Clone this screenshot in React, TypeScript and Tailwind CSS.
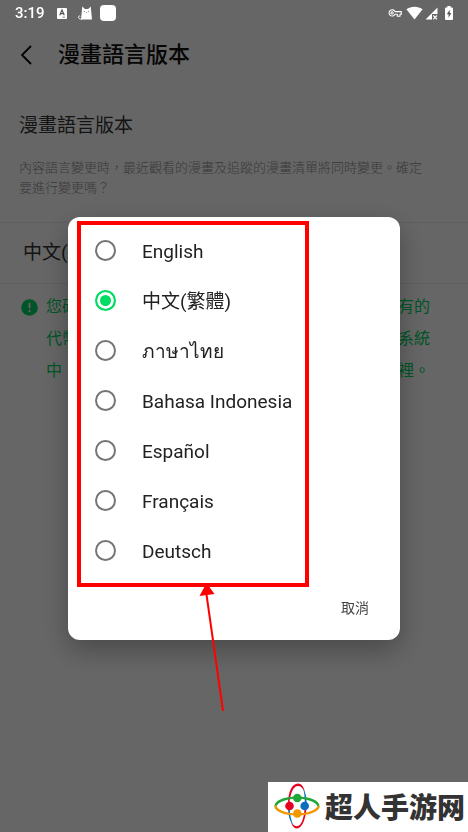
import React, { useState } from 'react';

const languages = [
  { code: 'en', label: 'English' },
  { code: 'zh-Hant', label: '中文(繁體)' },
  { code: 'th', label: 'ภาษาไทย' },
  { code: 'id', label: 'Bahasa Indonesia' },
  { code: 'es', label: 'Español' },
  { code: 'fr', label: 'Français' },
  { code: 'de', label: 'Deutsch' }
];

function StatusBar() {
  return (
    <header className="relative z-20 flex h-[26px] items-center justify-between px-[15px] text-white">
      <div className="flex items-center">
        <span className="text-[15px] font-medium leading-5">3:19</span>
        {/* Keyboard */}
        <svg className="ml-3 h-[11px] w-[10px]" viewBox="0 0 10 11">
          <rect width="10" height="11" rx="1" fill="#fff" />
          <path d="M2.7 7.2 5 2l2.3 5.2M3.5 5.6h3" fill="none" stroke="#555" strokeWidth="1.2" />
          <path d="M5.5 9.2h2.6" stroke="#666" strokeWidth="0.8" />
        </svg>
        {/* Cat */}
        <svg className="ml-[11px] h-[14px] w-[14px]" viewBox="0 0 14 14">
          <path d="M3 13.600 3.800 5.500 4.300.400 6.900 3h3.300L12.700.400l.5 5.100.8 8.100z" fill="#fff" />
          <path
            d="M4 13.100C1.500 13.500.3 12.300.5 10.800c.2-.9 1.300-1.100 1.800-.4"
            fill="none"
            stroke="#fff"
            strokeWidth="0.9"
          />
          <path d="M5.800 5.400h1.200M10 5.400h1.200M7.900 6.700h1.200" stroke="#777" strokeWidth="0.8" />
        </svg>
        <span className="ml-2 h-4 w-4 rounded bg-white" />
      </div>
      <div className="flex items-center">
        {/* VPN key */}
        <svg className="h-[10px] w-[14px]" viewBox="0 0 14 10" fill="none" stroke="#fff" strokeWidth="1.1">
          <path d="M7 3.6h6.3v2.6H12v2H9.3v-2H7A3.1 3.1 0 1 1 7 3.6z" strokeLinejoin="round" />
          <circle cx="4.1" cy="4.9" r="1.1" />
        </svg>
        {/* Wifi */}
        <svg className="ml-1 h-[14px] w-[17px]" viewBox="0 0 17 14">
          <path d="M.4 3.3C4.9-.2 12.1-.2 16.6 3.3L8.5 13.5z" fill="#fff" />
        </svg>
        {/* Mobile signal */}
        <svg className="ml-[2px] h-[13px] w-[13px]" viewBox="0 0 13 13">
          <path d="M12.5.5V7H7v5.5H.5z" fill="#fff" />
          <path d="m8.3 8.5 3.7 3.8M12 8.5l-3.7 3.8" stroke="#fff" strokeWidth="1.1" />
        </svg>
        {/* Battery */}
        <svg className="ml-[7px] h-[14px] w-2" viewBox="0 0 8 14">
          <path d="M2.3 0h3.4v1.5H7q1 0 1 1V13q0 1-1 1H1q-1 0-1-1V2.500q0-1 1-1h1.300z" fill="#fff" />
          <path d="M4.700 3.800 1.800 8.300h1.800v3.400l2.700-4.700H4.700z" fill="#555" />
        </svg>
      </div>
    </header>
  );
}

function SettingsPage() {
  return (
    <main className="text-[#222]">
      <div className="flex h-[58px] items-center pl-5">
        <button type="button" aria-label="返回" className="text-black">
          <svg className="h-5 w-3" viewBox="0 0 12 20" fill="none" stroke="currentColor" strokeWidth="1.800">
            <path d="M11 1 2 10l9 9" />
          </svg>
        </button>
        <h1 className="ml-[26px] text-[22px] font-medium leading-8 text-[#111]">漫畫語言版本</h1>
      </div>

      <section className="px-[19px] pb-6 pt-7">
        <h2 className="text-[19px] leading-7 text-[#333]">漫畫語言版本</h2>
        <p className="mt-[18px] text-[13px] font-light leading-5 text-[#909090]">
          內容語言變更時，最近觀看的漫畫及追蹤的漫畫清單將同時變更。確定
          <br />
          要進行變更嗎？
        </p>
      </section>

      <button
        type="button"
        className="block h-[62px] w-full border-y border-[#eee] px-[23px] text-left text-[19px] text-[#333]"
      >
        中文(繁體)
      </button>

      <div className="flex px-[21px] pt-[7px] text-[#00d564]">
        <svg className="mt-2 h-[17px] w-[17px] shrink-0" viewBox="0 0 17 17">
          <circle cx="8.5" cy="8.5" r="8.300" fill="currentColor" />
          <path d="M8.500 4v5.500M8.500 11v2" stroke="#666" strokeWidth="1.800" />
          <path d="M8.500 4v5.500M8.500 11v2" stroke="#fff" strokeWidth="1.800" />
        </svg>
        <p className="ml-2 text-base leading-8">
          您確認變更漫畫語言版本後，原先語言版本中您持有的
          <br />
          代幣及閱覽紀錄將會分別保存於各語言版本所屬的系統
          <br />
          中，切換回原語言版本後仍可於個人頁面的代幣盒裡。
        </p>
      </div>
    </main>
  );
}

function LanguageDialog() {
  const [selected, setSelected] = useState('zh-Hant');

  return (
    <div className="fixed inset-0 z-10 flex items-center bg-black/60 px-[68px] pt-6">
      <div
        role="dialog"
        aria-label="漫畫語言版本"
        className="relative w-full rounded-xl bg-white pb-4 pt-[9px] shadow-[0_10px_28px_rgba(0,0,0,0.3)]"
      >
        <fieldset>
          {languages.map((language) => (
            <label
              key={language.code}
              className="flex h-[50px] items-center pl-[27px] text-[19px] leading-7 text-[#222]"
            >
              <input
                type="radio"
                name="language"
                value={language.code}
                checked={selected === language.code}
                onChange={() => setSelected(language.code)}
                className="h-[21px] w-[21px] appearance-none rounded-full border-2 border-[#757575] checked:border-[#00dc64] checked:bg-[#00dc64] checked:shadow-[inset_0_0_0_3px_#fff]"
              />
              <span className="pl-[26px] pt-0.5">{language.label}</span>
            </label>
          ))}
        </fieldset>
        <div className="flex justify-end pr-[31px] pt-4">
          <button type="button" className="h-8 text-sm text-[#444]">
            取消
          </button>
        </div>

        {/* Callout around the language list */}
        <div className="pointer-events-none absolute bottom-[53px] left-[9px] right-[91px] top-1 border-4 border-[#f00]" />
        <svg className="pointer-events-none absolute left-[130px] top-[366px] h-32 w-7" viewBox="0 0 28 128">
          <path d="m8 8 17 120" stroke="#f00" strokeWidth="2" />
          <path d="M8.500 0 1.500 13 16.500 11z" fill="#f00" />
        </svg>
      </div>
    </div>
  );
}

function SiteBadge() {
  return (
    <footer className="fixed bottom-0 right-0 z-30 flex h-[50px] items-center bg-white pb-0.5 pl-[5px] pr-[3px]">
      <svg className="h-12 w-12" viewBox="0 0 48 48">
        {/* Tapered orbits */}
        <path d="M15 22C15 10 19 1.500 25 1.500c4 0 6 4 7 9-2-4-4-6.500-7-6.500-5 0-8 8-8.500 18z" fill="#e60020" />
        <path d="M30 6c3 5 4 11 3.500 18h-1.800C32 17 31.500 11 30 6z" fill="#0a6ebd" />
        <path d="M15 25c0 9 2 15 6 19.500-2.500-5-4.300-11-4.200-19.500z" fill="#0a6ebd" />
        <path d="M33.500 25C33 37 29 46.500 24 46.500c-2.500 0-4.500-2-6-6 2 2.500 4 3.700 6 3.700 4 0 7-7 7.700-19.200z" fill="#e60020" />
        <path d="M24 14.500c13 0 22.500 4 22.500 9.500 0 2-1 3.500-3 4.500 1-1.500 1.400-3 1-4.200C43 20 34 17 24 16.500z" fill="#1fa838" />
        <path d="M24 14.500C11 14.500 1.500 18.500 1.500 24c0 2 1 3.500 3 4.500-1-1.500-1.400-3-1-4.200C5 20 14 17 24 16.500z" fill="#1fa838" />
        <path d="M1.500 24c0 5.500 9.500 9.500 22.500 9.500v-2C13 31 4 28 3 23z" fill="#f39800" />
        <path d="M46.500 24c0 5.500-9.500 9.500-22.500 9.500v-2C35 31 44 28 45 23z" fill="#f39800" />
        <circle cx="24.300" cy="16" r="4.300" fill="#1fa838" />
        <circle cx="16.500" cy="24" r="4.300" fill="#e60020" />
        <circle cx="31.700" cy="24" r="4.300" fill="#0a6ebd" />
        <circle cx="24.300" cy="31.500" r="4.300" fill="#f39800" />
      </svg>
      <span className="ml-1 font-['Noto_Sans_CJK_SC',sans-serif] text-[28px] font-black leading-10 text-[#333]">
        超人手游网
      </span>
    </footer>
  );
}

export default function App() {
  return (
    <div className="min-h-screen bg-white font-['Roboto','Noto_Sans_CJK_TC',sans-serif]">
      <StatusBar />
      <SettingsPage />
      <LanguageDialog />
      <SiteBadge />
    </div>
  );
}
